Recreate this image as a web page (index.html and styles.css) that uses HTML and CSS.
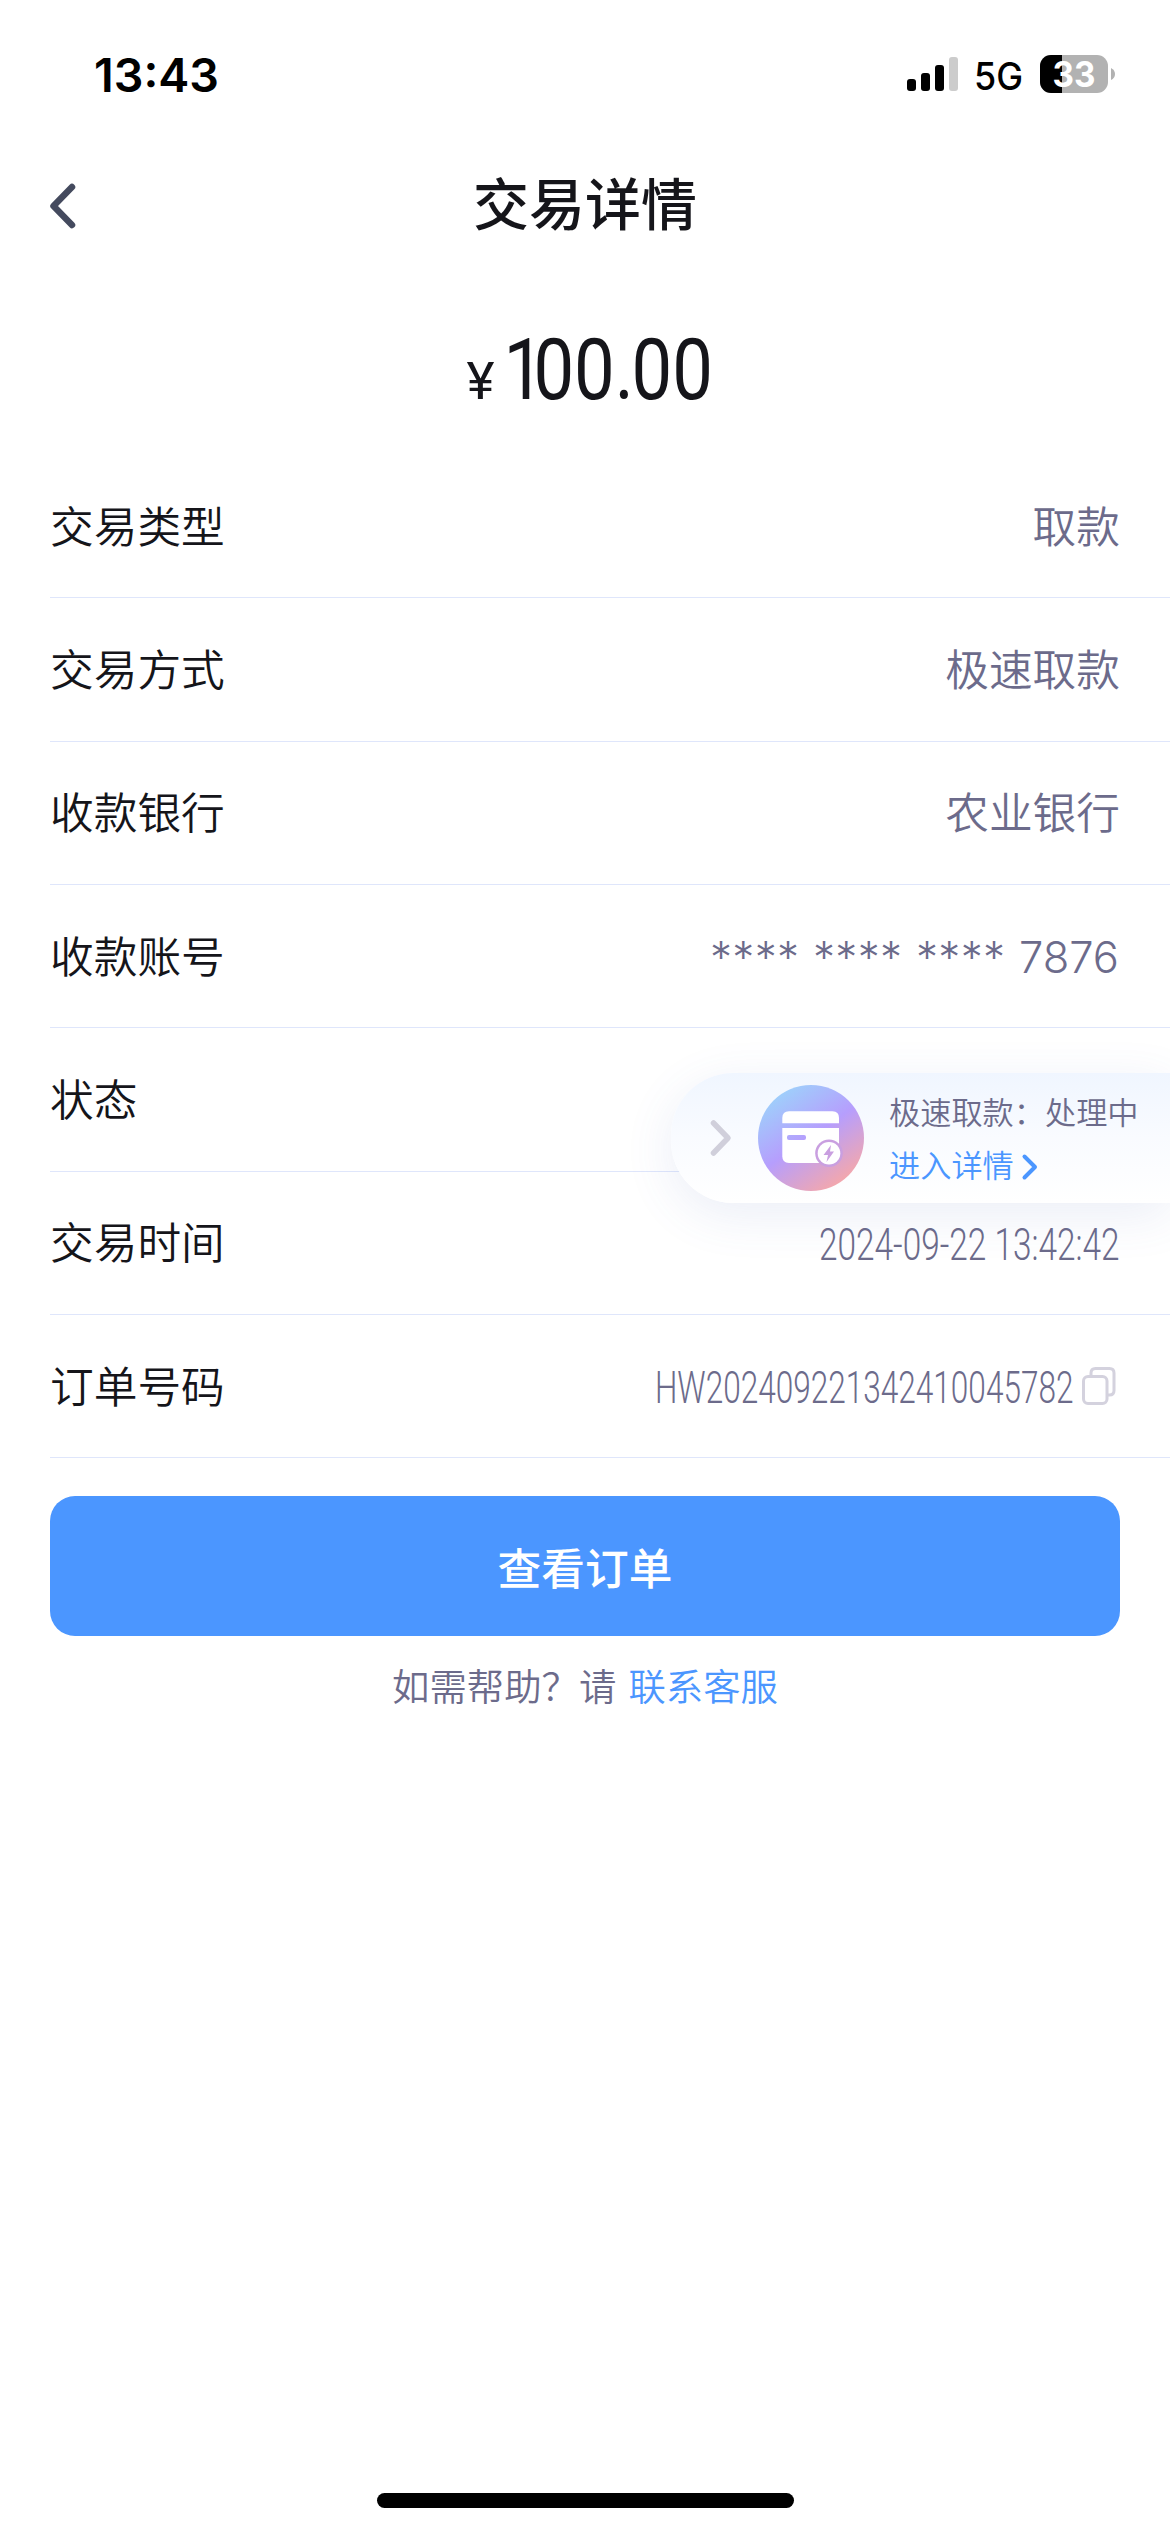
FILE: index.html
```html
<!DOCTYPE html>
<html lang="zh-CN">
<head>
<meta charset="utf-8">
<title>交易详情</title>
<link rel="stylesheet" href="styles.css">
</head>
<body>
<div class="screen">
  <header class="status">
    <svg class="time" width="130" height="50" viewBox="0 0 130 50"><text x="1" y="41.500" textLength="125" lengthAdjust="spacingAndGlyphs">13:43</text></svg>
    <div class="indicators">
      <svg width="51" height="34" viewBox="0 0 51 34">
        <rect x="0" y="22" width="9" height="12" rx="3"/>
        <rect x="14" y="16" width="9" height="18" rx="3"/>
        <rect x="28" y="8" width="9" height="26" rx="3"/>
        <rect x="42" y="0" width="9" height="34" rx="3" fill="#cccccc"/>
      </svg>
      <svg class="network" width="50" height="38" viewBox="0 0 50 38"><text x="0" y="34.500" textLength="49" lengthAdjust="spacingAndGlyphs">5G</text></svg>
      <svg class="battery" width="76" height="38" viewBox="0 0 76 38">
        <rect width="68" height="38" rx="11" fill="#b2b2b2"/>
        <path d="M11 0H22V38H11A11 11 0 0 1 0 27V11A11 11 0 0 1 11 0Z"/>
        <path d="M71 13Q75 15 75 19T71 25Z" fill="#b2b2b2"/>
        <text x="12.500" y="31.500" textLength="43" lengthAdjust="spacingAndGlyphs">33</text>
      </svg>
    </div>
  </header>

  <nav class="navbar">
    <svg class="back" width="25" height="46" viewBox="0 0 25 46"><path d="M22 4 3.500 23 22 42"/></svg>
    <h1 class="title">交易详情</h1>
  </nav>

  <div class="amount">
    <svg width="250" height="80" viewBox="0 0 250 80">
      <text class="yen" x="6.500" y="68.500" textLength="28" lengthAdjust="spacingAndGlyphs">¥</text>
      <text class="sum" transform="translate(43.500 68.500) scale(.842 1)" dx="0 -12.800 0 0 -2.900 0">100.00</text>
    </svg>
  </div>

  <main class="rows">
    <div class="row"><span class="label">交易类型</span><span class="value">取款</span></div>
    <div class="row"><span class="label">交易方式</span><span class="value">极速取款</span></div>
    <div class="row"><span class="label">收款银行</span><span class="value">农业银行</span></div>
    <div class="row"><span class="label">收款账号</span>
      <svg class="account" width="410" height="50" viewBox="0 0 410 50">
        <text x="0" y="41.500" textLength="89" lengthAdjust="spacing">****</text>
        <text x="103" y="41.500" textLength="89" lengthAdjust="spacing">****</text>
        <text x="206" y="41.500" textLength="89" lengthAdjust="spacing">****</text>
        <text x="309" y="41.500" textLength="100" lengthAdjust="spacingAndGlyphs">7876</text>
      </svg>
    </div>
    <div class="row"><span class="label">状态</span></div>
    <div class="row"><span class="label">交易时间</span>
      <svg class="narrow" width="310" height="50" viewBox="0 0 310 50"><text transform="translate(9 42) scale(.757 1)" textLength="397" lengthAdjust="spacingAndGlyphs">2024-09-22 13:42:42</text></svg>
    </div>
    <div class="row"><span class="label">订单号码</span>
      <div class="order">
        <svg class="narrow" width="430" height="50" viewBox="0 0 430 50"><text transform="translate(10 42) scale(.719 1)" textLength="582" lengthAdjust="spacingAndGlyphs">HW202409221342410045782</text></svg>
        <svg class="copy" width="34" height="38" viewBox="0 0 34 38"><rect x="1.500" y="9.500" width="23.500" height="27" rx="4.500"/><path d="M9 8V6Q9 1.500 13.500 1.500H27.500Q32 1.500 32 6V23.500Q32 28 27.500 28H26"/></svg>
      </div>
    </div>
  </main>

  <div class="actions">
    <button class="primary">查看订单</button>
    <p class="help">如需帮助？请<a class="link">联系客服</a></p>
  </div>

  <div class="home"></div>

  <aside class="float">
    <svg class="expand" width="22" height="38" viewBox="0 0 22 38"><path d="M3.500 4 18 19 3.500 34"/></svg>
    <svg class="badge" width="106" height="106" viewBox="0 0 106 106">
      <defs>
        <linearGradient id="g" gradientUnits="userSpaceOnUse" x1="20" y1="8" x2="82" y2="98">
          <stop offset="0" stop-color="#9ed0fb"/>
          <stop offset=".5" stop-color="#b69efd"/>
          <stop offset="1" stop-color="#f3a7ad"/>
        </linearGradient>
      </defs>
      <circle cx="53" cy="53" r="53" fill="url(#g)"/>
      <path fill="#fff" d="M24.300 38.300V33Q24.300 26.300 31 26.300H74.500Q81 26.300 81 33V38.300Z"/>
      <path fill="#fff" d="M24.300 43H81V72Q81 78 75 78H31Q24.300 78 24.300 71.300Z"/>
      <rect x="29" y="50" width="19" height="5" rx="2" fill="url(#g)"/>
      <circle cx="71" cy="68.300" r="13.800" fill="#c99fe0"/>
      <circle cx="71" cy="68.300" r="11.300" fill="#fff"/>
      <path fill="#c99fe0" d="M73 60 65.500 70H70L68.500 77 76 66.500H72Z"/>
    </svg>
    <div class="copytext">
      <div class="state">极速取款：处理中</div>
      <div class="enter">进入详情<svg width="16" height="26" viewBox="0 0 16 26"><path d="M2.500 2.500 13 13 2.500 23.500"/></svg></div>
    </div>
  </aside>
</div>
</body>
</html>
```
FILE: styles.css
```css
* { box-sizing: border-box; }
body {
  margin: 0;
  background: #fff;
  color: #15151a;
  font-family: Inter, "Noto Sans CJK SC", sans-serif;
}
svg { display: block; flex: none; overflow: visible; }
.screen {
  position: relative;
  width: 1170px;
  height: 2532px;
  overflow: hidden;
  display: flex;
  flex-direction: column;
}
.status {
  height: 141px;
  padding: 50px 54px 0 93px;
  display: flex;
  justify-content: space-between;
  align-items: flex-start;
  color: #000;
}
.time { font-size: 46px; font-weight: 600; }
.indicators { display: flex; align-items: flex-end; padding-top: 5px; gap: 16px; }
.indicators > svg:first-child { margin-bottom: 2px; }
.network { font-size: 38px; font-weight: 500; }
.battery { font-size: 35px; font-weight: 700; }
.battery text { fill: #fff; }

.navbar {
  height: 129px;
  padding: 0 50px;
  display: grid;
  grid-template-columns: 25px 1fr 25px;
  align-items: center;
}
.back path { fill: none; stroke: #444a5e; stroke-width: 6.5; stroke-linecap: round; stroke-linejoin: round; }
.title { margin: 0; padding-bottom: 1px; text-align: center; font-size: 56px; line-height: 78px; font-weight: 500; }

.amount { height: 185px; padding-top: 60px; display: flex; justify-content: center; font-family: Roboto, sans-serif; fill: #15151a; }
.yen { font-size: 52px; font-weight: 450; }
.sum { font-size: 86px; font-weight: 450; }

.rows { padding-left: 50px; }
.row {
  height: 143.35px;
  padding-right: 50px;
  border-bottom: 1px solid #dfe6fb;
  display: flex;
  align-items: center;
  justify-content: space-between;
}
.label, .value { padding-top: 3px; font-size: 43.7px; line-height: 60px; font-weight: 350; }
.value { color: #6c6b8b; }
.account { font-size: 44px; font-weight: 300; fill: #6c6b8b; }
.narrow { font-family: Roboto, sans-serif; font-size: 43.6px; font-weight: 340; fill: #6c6b8b; }
.order { display: flex; align-items: center; gap: 7px; padding-right: 4px; }
.copy { fill: none; stroke: #d4d2de; stroke-width: 3; }

.actions { padding: 37.5px 50px 0; }
.primary {
  display: block;
  width: 100%;
  height: 140px;
  padding: 0;
  border: 0;
  border-radius: 25px;
  background: #4b96ff;
  color: #fff;
  font: 500 43.7px/60px "Noto Sans CJK SC", sans-serif;
}
.help { margin: 26px 0 0; text-align: center; font-size: 37.4px; line-height: 52px; color: #6c6b8b; font-weight: 350; }
.link { color: #4b96ff; margin-left: 12px; }

.home { width: 417px; height: 15px; margin: auto auto 24px; border-radius: 8px; background: #000; }

.float {
  position: absolute;
  top: 1073px;
  right: 0;
  width: 499px;
  height: 130px;
  padding-left: 39px;
  display: flex;
  align-items: center;
  border-radius: 62px 0 0 62px;
  background: linear-gradient(#f0f6ff, #f9fbff 50%, #fff);
  box-shadow: 0 12px 50px rgba(70, 100, 180, .11);
}
.expand path { fill: none; stroke: #d0cfdb; stroke-width: 5.5; stroke-linecap: round; stroke-linejoin: round; }
.badge { margin-left: 26px; }
.copytext { margin-left: 25px; padding-top: 4px; white-space: nowrap; font-size: 31.2px; line-height: 53px; color: #6c6b8b; font-weight: 350; }
.enter { display: flex; align-items: center; gap: 8px; color: #4b96ff; }
.enter path { fill: none; stroke: #4b96ff; stroke-width: 4; stroke-linecap: round; stroke-linejoin: round; }
```
